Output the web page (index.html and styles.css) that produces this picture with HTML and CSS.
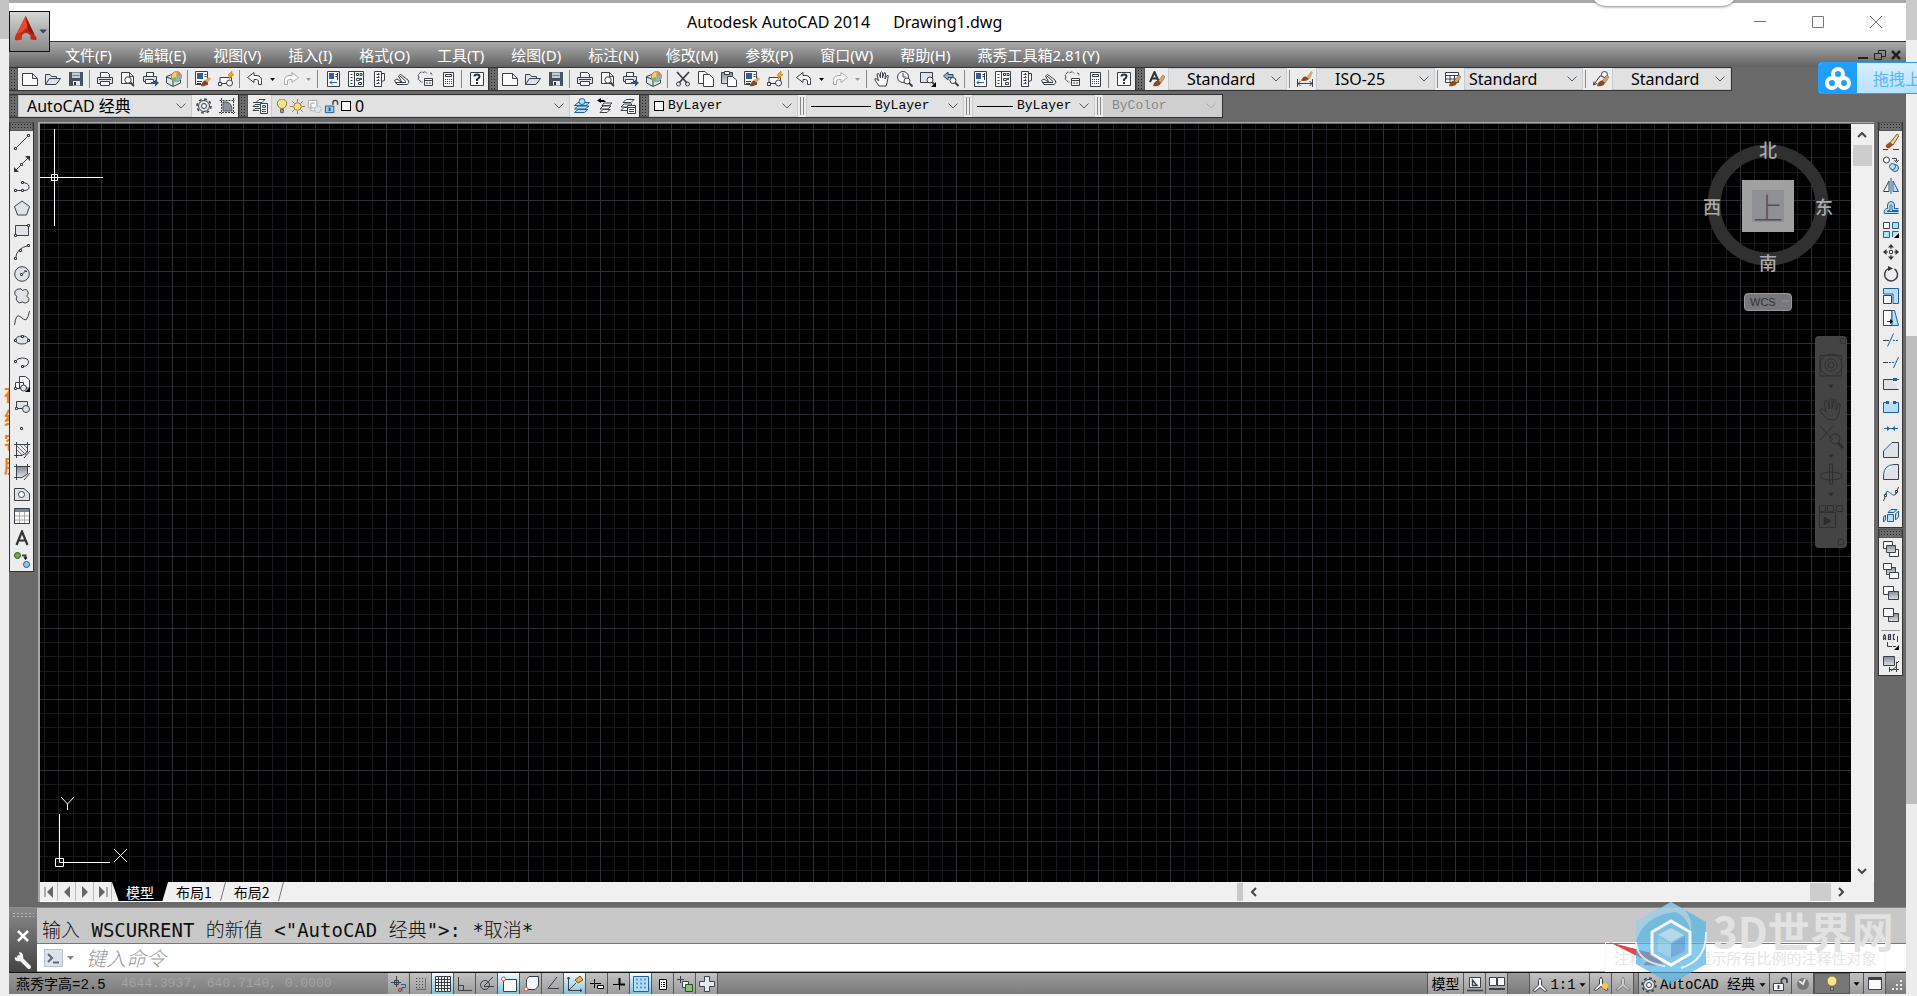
FILE: index.html
```html
<!DOCTYPE html>
<html lang="zh-CN">
<head>
<meta charset="utf-8">
<title>Autodesk AutoCAD 2014 - Drawing1.dwg</title>
<link rel="stylesheet" href="styles.css">
</head>
<body>
<svg class="sprite" aria-hidden="true">
  <defs>
    <linearGradient id="shade" x1="0" y1="0" x2="0" y2="1"><stop offset="0" stop-color="#858b94"/><stop offset="1" stop-color="#dde0e4"/></linearGradient>
    <pattern id="mesh" width="285" height="285" x="61" y="5" patternUnits="userSpaceOnUse">
      <path class="minor" d="M14.500 0V285M28.500 0V285M43.500 0V285M57.500 0V285M85.500 0V285M100.500 0V285M114.500 0V285M128.500 0V285M157.500 0V285M171.500 0V285M185.500 0V285M200.500 0V285M228.500 0V285M242.500 0V285M257.500 0V285M271.500 0V285"/>
      <path class="minor" d="M0 14.500H285M0 28.500H285M0 43.500H285M0 57.500H285M0 85.500H285M0 100.500H285M0 114.500H285M0 128.500H285M0 157.500H285M0 171.500H285M0 185.500H285M0 200.500H285M0 228.500H285M0 242.500H285M0 257.500H285M0 271.500H285"/>
      <path class="major" d="M.5 0V285M71.500 0V285M142.500 0V285M214.500 0V285M0 .5H285M0 71.500H285M0 142.500H285M0 214.500H285"/>
    </pattern>
    <symbol id="new" viewBox="0 0 16 16"><path class="k w" d="M.5 2.500H10.500L15.500 7.500V14.500H.5zM10.500 2.500V7.500H15.500"/></symbol>
    <symbol id="open" viewBox="0 0 16 16"><path class="k g" d="M.5 13.500V3.500L5 3.500 6.500 5.500H11.500V7.500M.5 13.500L4.500 7.500H15.500L11 13.500z"/></symbol>
    <symbol id="save" viewBox="0 0 16 16"><path d="M1 1H15V15H1z" fill="#4a5360"/><path d="M4 1.500H12V7H4z" fill="#c3cbd6"/><path d="M5 10H12V14.500H5z" fill="#e8ecf0"/><path d="M6 11H8V14H6z" fill="#333"/><path d="M4.500 4.500H11.500" stroke="#77818e"/></symbol>
    <symbol id="print" viewBox="0 0 16 16"><path class="k w" d="M3.500 6V1.500H10.500L12.500 3.500V6"/><path class="k g" d="M.5 6.500H15.500V12.500H.5z"/><path class="k w" d="M3.500 10.500H12.500V14.500H3.500z"/><path class="k" d="M2 8.500H14"/></symbol>
    <symbol id="preview" viewBox="0 0 16 16"><path class="k w" d="M1.500 1.500H9.500L13.500 5.500V12.500H1.500zM9.500 1.500V5.500H13.500"/><circle class="k w" cx="8" cy="9" r="3.200"/><path class="k t" d="M10.500 11.500L14 15"/></symbol>
    <symbol id="publish" viewBox="0 0 16 16"><path class="k w" d="M3.500 5V1.500H10.500V5"/><path class="k g" d="M.5 5.500H13.500V10.500H.5z"/><path class="k w" d="M2.500 8.500H10.500V12.500H2.500z"/><path d="M8 11H12V8.500L16 12 12 15.500V13H8z" fill="#225b95"/></symbol>
    <symbol id="print3d" viewBox="0 0 16 16"><path class="k g" d="M.5 5.500L6 3.500 14.500 6V12L7 15.500 .5 12zM.5 6L7 8.500V15"/><circle cx="10.500" cy="5.500" r="5" fill="#f1d36b" stroke="#7d8c93"/><path d="M10.500 5.500V.5A5 5 0 0 1 15.500 5.500z" fill="#e08a5b"/><path d="M10.500 5.500H15.500A5 5 0 0 1 10.500 10.500z" fill="#78b6df"/><path d="M10.500 5.500V10.500A5 5 0 0 1 6 7z" fill="#86b867"/></symbol>
    <symbol id="match" viewBox="0 0 16 16"><path class="k w" d="M.5 .5H12.500V13.500H.5z"/><path d="M2 2H8V8H2z" fill="#2f5f96"/><path class="k" d="M9.500 3.500H11.500M9.500 5.500H11.500M2 10.500H7M2 12.500H6"/><path d="M9 10L14 6 16 8 12 12z" fill="#d8a66c"/><path d="M6 15Q7 10 10 9.500L13 12Q11 16 6 15z" fill="#8b4a1d"/></symbol>
    <symbol id="block" viewBox="0 0 16 16"><path class="k w" d="M2 6.500H13.500V12.500H2z"/><circle class="k w" cx="11.500" cy="12" r="3"/><path class="k w" d="M.5 11.500H3.500V14.500H.5z"/><path d="M10 4L14 0V3L16 3.500 11 8V5z" fill="#f0a324" stroke="#b26b00" stroke-width=".5"/></symbol>
    <symbol id="undo" viewBox="0 0 16 16"><path class="k w" d="M.5 6.500L7 1.500V4.500H10Q14.500 5 14.500 9.500V13.500H11.500V10Q11 8.500 9.500 8.500H7V11.500z"/></symbol>
    <symbol id="redo" viewBox="0 0 16 16"><path class="q w" d="M15.500 6.500L9 1.500V4.500H6Q1.500 5 1.500 9.500V13.500H4.500V10Q5 8.500 6.500 8.500H9V11.500z"/></symbol>
    <symbol id="tri" viewBox="0 0 7 5"><path d="M1 1H6L3.500 4z" fill="currentColor"/></symbol>
    <symbol id="props" viewBox="0 0 16 16"><path class="k w" d="M2.500 .5H14.500V15.500H2.500z"/><path d="M4 2H9V8H4z" fill="#2f5f96"/><path class="k" d="M10.500 3.500H13M10.500 5.500H13M12.500 2V9"/><path d="M5 11.500H12M5 11.500L7 9.500M5 11.500L7 13.500" class="b"/></symbol>
    <symbol id="dc" viewBox="0 0 16 16"><path class="k w" d="M.5 .5H15.500V15.500H.5zM6.500 .5V15.500"/><path class="k" d="M2.500 3.500H4.500M2.500 6.500H4.500M2.500 9.500H4.500M2.500 12.500H4.500M8.500 2.500H10.500V4.500H8.500zM12 2.500H14V4.500H12zM8.500 7.500H11.500V9.500H8.500zM10.500 11.500H13.500V13.500H10.500z"/><path d="M12 7H14V9H12z" fill="#2f5f96"/></symbol>
    <symbol id="palettes" viewBox="0 0 16 16"><path class="k w" d="M3.500 .5H10.500V15.500H3.500zM10.500 2.500H13.500V9.500L10.500 10.500"/><path class="k" d="M5.500 3.500H9M5.500 6.500H9M5.500 9.500H9M5.500 12.500H9M7.500 2V14" stroke-dasharray="2 1"/></symbol>
    <symbol id="sheet" viewBox="0 0 16 16"><path class="k w" d="M.5 9.500L3 8 8 11.500 4.500 5 6.500 3.500 14 9Q16.500 12 13 13.500H3z"/><path class="k" d="M1 11.500H12M6 5L12 10.500"/></symbol>
    <symbol id="markup" viewBox="0 0 16 16"><path class="k" d="M2 6Q0 4 2.500 3 3 0 6 1.500 9 0 10 2.500M2 6Q0 9 3 9.500 4 12 6 11M13 2Q16 2 14.500 5" stroke-dasharray="3 1"/><path class="k w" d="M7.500 7.500H15.500V14.500H7.500zM7.500 9.500H15.500"/><path class="k" d="M9 12H14" stroke-dasharray="2 1"/></symbol>
    <symbol id="calc" viewBox="0 0 16 16"><path class="k w" d="M3.500 1.500H13.500V15.500H3.500z"/><path class="k" d="M5.500 3.500H11.500V5.500H5.500z"/><path class="k" d="M5 8.500H12M5 10.500H12M5 12.500H12" stroke-dasharray="1 1"/></symbol>
    <symbol id="help" viewBox="0 0 16 16"><path class="k w" d="M1.500 1.500H14.500V14.500H1.500z"/><path d="M5.500 5.500Q5.500 3.500 8 3.500T10.500 5.500Q10.500 7 8 8.500V10" fill="none" stroke="#29303a" stroke-width="2"/><path d="M7 11H9V13H7z" fill="#29303a"/></symbol>
    <symbol id="cut" viewBox="0 0 16 16"><path d="M2 1L12 12M14 1L4 12" stroke="#3a4048" stroke-width="1.800" fill="none"/><circle class="k" cx="3.500" cy="13" r="2"/><circle class="k" cx="12.500" cy="13" r="2"/></symbol>
    <symbol id="copyc" viewBox="0 0 16 16"><path class="k w" d="M.5 .5H7L9.500 3V12.500H.5z"/><path class="k w" d="M5.500 3.500H11.500L15.500 7.500V15.500H5.500z"/></symbol>
    <symbol id="paste" viewBox="0 0 16 16"><path class="k sh" d="M.5 1.500H11.500V12.500H.5z"/><path class="k w" d="M3.500 .5H8.500V3.500H3.500z"/><path class="k w" d="M6.500 5.500H11.500L15.500 9V15.500H6.500z"/></symbol>
    <symbol id="pan" viewBox="0 0 16 16"><path class="k w" d="M5 15L1 9Q0 7 3 8L4.500 10 3 3Q4.500 1.500 5.500 4L6.500 7V1.500Q8 0 8.500 1.500V7L10 2Q11.500 1 11.500 3L11 8 13 4.500Q15 4 14 6.500L13 12 12 15z"/></symbol>
    <symbol id="zoomrt" viewBox="0 0 16 16"><circle class="k w" cx="6" cy="6" r="5.500"/><path class="k" d="M6 2V6H9"/><circle class="k w" cx="10" cy="10" r="3"/><path class="k t" d="M12 12L15.500 15.500"/></symbol>
    <symbol id="zoomwin" viewBox="0 0 16 16"><path class="k g" d="M.5 1.500H12.500V11.500H.5z"/><circle class="k w" cx="10" cy="9" r="3"/><path class="k t" d="M12 11L14 13"/><path d="M16 11V16H11z"/></symbol>
    <symbol id="zoomprev" viewBox="0 0 16 16"><path d="M.5 5L5 1V3.500H10V6.500H5V9z" fill="#8fb4d4" stroke="#314254"/><circle class="k w" cx="10" cy="9.500" r="3"/><path class="k t" d="M12 11.500L15.500 15"/></symbol>
    <symbol id="brush" viewBox="0 0 16 16"><path d="M9 10L14 4 16 6 12 12z" fill="#d8a66c" stroke="#6b4a2c" stroke-width=".5"/><path d="M4 15Q5 10 9 9.500L12 12Q10 16 4 15z" fill="#8b4a1d"/></symbol>
    <symbol id="textstyle" viewBox="0 0 16 16"><path d="M1 11L5.500 1 10 11M3 7.500H8" fill="none" stroke="#333" stroke-width="2"/><use href="#brush" width="16" height="16"/></symbol>
    <symbol id="dimstyle" viewBox="0 0 16 16"><path class="k" d="M.5 8V16M15.500 8V16M1 12.500H15M3.500 10L1 12.500 3.500 15M12.500 10L15 12.500 12.500 15"/><path d="M9 7L14 0 16 1 13 8z" fill="#d8a66c"/><path d="M4 9.500Q6 5 9 5.500L12 8Q9 11 4 9.500z" fill="#8b4a1d"/></symbol>
    <symbol id="tablestyle" viewBox="0 0 16 16"><path class="k w" d="M.5 1.500H13.500V11.500H.5zM.5 4.500H13.500M.5 8H13.500M5 4V11.500M9.500 4V11.500"/><use href="#brush" width="16" height="16"/></symbol>
    <symbol id="leaderstyle" viewBox="0 0 16 16"><path class="k" d="M.5 14L7 5H9M.5 14L1 10.500M.5 14L4 12.500"/><circle class="k w" cx="11.500" cy="3.500" r="3"/><use href="#brush" width="16" height="16"/></symbol>
    <symbol id="gear" viewBox="0 0 16 16"><circle class="k" cx="8" cy="8" r="7" stroke-width="1.500" stroke-dasharray="2.800 2.690"/><circle class="k g" cx="8" cy="8" r="5.500"/><circle class="k w" cx="8" cy="8" r="2.500"/></symbol>
    <symbol id="myws" viewBox="0 0 16 16"><path class="k" d="M.5 2.500H16M2.500 0V16M0 14.500H16M14.500 0V16" stroke-dasharray="2 1"/><path d="M4 13V4H8Q13 5 13 13z" fill="#8c939c" stroke="#555"/></symbol>
    <symbol id="layerprops" viewBox="0 0 16 16"><path class="k w" d="M4 4.500L7 1.500H13L10 4.500zM1 8.500L3 6.500H8M1 12.500L3 10.500H8M1 4.500H6M1 8.500H7M1 12.500H7"/><path class="k w" d="M8.500 5.500H15.500V15.500H8.500z"/><path class="b bf" d="M10.500 7.500H13.500V9.500H10.500z"/><path class="b" d="M10 11.500H14M10 13.500H14"/></symbol>
    <symbol id="layercur" viewBox="0 0 16 16"><path class="b bf" d="M.5 14.500L4 11.500H14L10.500 14.500zM.5 11L4 8H15L11 11zM.5 7.500L4 4.500H15.500L12 7.500z"/><circle class="b bf" cx="8" cy="3.500" r="3"/></symbol>
    <symbol id="layerprev" viewBox="0 0 16 16"><path class="k w" d="M3 14.500L6 11.500H13L10 14.500zM3 11L6 8H14L11 11zM5 7.500L7 5H15L12 7.500z"/><path d="M0 2.500L4 0V2H7L9 4H4V5z"/></symbol>
    <symbol id="layerstate" viewBox="0 0 16 16"><path class="k w" d="M1 12.500L4 9.500H11L8 12.500zM1 9L4 6H12L9 9zM3 4.500L6 1.500H14L11 4.500z"/><path class="k w" d="M7.500 7.500H15.500V15.500H7.500zM7.500 9.500H15.500M9 11.500H14M9 13.500H14"/></symbol>
    <symbol id="bulb" viewBox="0 0 12 16"><path d="M4 10Q1 7.500 1 5A5 5 0 0 1 11 5Q11 7.500 8 10z" fill="#fbe28f" stroke="#8c7333"/><path d="M4.500 11H7.500V14.500H4.500z" fill="#a2a2a2" stroke="#555"/></symbol>
    <symbol id="sun" viewBox="0 0 16 16"><circle cx="8" cy="8" r="4" fill="#fbdf86" stroke="#96741f"/><path d="M8 0V3M8 13V16M0 8H3M13 8H16M2.500 2.500L4.500 4.500M13.500 2.500L11.500 4.500M2.500 13.500L4.500 11.500M13.500 13.500L11.500 11.500" stroke="#96741f"/></symbol>
    <symbol id="vpfreeze" viewBox="0 0 16 16"><path class="q w" d="M1.500 1.500H10.500V9.500H1.500zM4 4.500H8M4 4.500V12.500H8"/><circle class="q g" cx="11.500" cy="11" r="3.500" stroke-dasharray="2 1"/></symbol>
    <symbol id="unlock" viewBox="0 0 16 16"><path class="k" d="M9.500 6V4Q9.500 1.500 12 1.500T14.500 4V6" stroke-width="1.500"/><path d="M1.500 7.500H10.500V14.500H1.500z" fill="#96cdf0" stroke="#265887"/><path d="M5 9H7V13H5z" fill="#265887"/></symbol>
    <symbol id="chev" viewBox="0 0 10 6"><path d="M.5 .5L5 5 9.500 .5" fill="none" stroke="currentColor"/></symbol>
    <symbol id="line" viewBox="0 0 16 16"><path class="k" d="M1.500 14.500L14.500 1.500"/><path class="k w" d="M.5 13.500H2.500V15.500H.5zM13.500 .5H15.500V2.500H13.500z"/></symbol>
    <symbol id="xline" viewBox="0 0 16 16"><path class="k" d="M1.500 14.500L14.500 1.500"/><path d="M0 16V11L5 16zM16 0V5L11 0z" fill="#333"/><path class="k w" d="M6.500 7.500H8.500V9.500H6.500z"/></symbol>
    <symbol id="pline" viewBox="0 0 16 16"><path class="k" d="M1.500 12.500H11Q15.500 12 15 8.500T8.500 4.500"/><path class="k w" d="M.5 11.500H2.500V13.500H.5zM7.500 11.500H9.500V13.500H7.500zM7.500 3.500H9.500V5.500H7.500z"/></symbol>
    <symbol id="polygon" viewBox="0 0 16 16"><path class="k g" d="M8 1L15.500 6.500 12.500 15H3.500L.5 6.500z"/></symbol>
    <symbol id="rect" viewBox="0 0 16 16"><path class="k g" d="M1.500 3.500H14.500V13.500H1.500z"/><path class="k w" d="M.5 12.500H2.500V14.500H.5zM13.500 2.500H15.500V4.500H13.500z"/></symbol>
    <symbol id="arc" viewBox="0 0 16 16"><path class="k" d="M1.500 14.500Q2.500 4 14.500 1.500"/><path class="k w" d="M.5 13.500H2.500V15.500H.5zM13.500 .5H15.500V2.500H13.500zM5.500 5.500H7.500V7.500H5.500z"/></symbol>
    <symbol id="circle" viewBox="0 0 16 16"><circle class="k g" cx="8" cy="8" r="7.300"/><path class="k" d="M8 8.500L12 4.500M11 4V5.500H13"/><path class="k w" d="M6.500 7.500H8.500V9.500H6.500z"/></symbol>
    <symbol id="cloud" viewBox="0 0 16 16"><path class="k g" d="M4 1Q8 0 8.500 2.500 13 0 14 4 15 7 12.500 8 16.500 10 14.500 13.500 11 16.500 8.500 14 5 16 3.500 13.500 1 11 3 8.500 -.5 7 1 3.500 2 1.500 4 1z"/></symbol>
    <symbol id="spline" viewBox="0 0 16 16"><path class="k" d="M.5 15Q2 3 6 6.500T12 10Q14.500 7 15.500 1"/></symbol>
    <symbol id="ellipse" viewBox="0 0 16 16"><ellipse class="k g" cx="8" cy="8" rx="6.500" ry="4"/><path class="k w" d="M.5 7.500H2.500V9.500H.5zM13.500 7.500H15.500V9.500H13.500zM7.500 3.500H9.500V5.500H7.500z"/></symbol>
    <symbol id="elarc" viewBox="0 0 16 16"><path class="k" d="M1.500 7.500Q3 4 8 4 14.500 4 14.500 8T9 12.500"/><path class="k w" d="M.5 6.500H2.500V8.500H.5zM7.500 11.500H9.500V13.500H7.500z"/></symbol>
    <symbol id="insert" viewBox="0 0 16 16"><path class="k w" d="M5.500 .5H11.500L15.500 4V12H5.500zM1.500 6.500H9.500V12.500H1.500z"/><circle class="k g" cx="9.500" cy="12" r="3"/><path class="k w" d="M.5 11.500H2.500V13.500H.5z"/><path d="M16 11V16H11z"/></symbol>
    <symbol id="mkblock" viewBox="0 0 16 16"><path class="k g" d="M2.500 3.500H13.500V10.500H2.500z"/><circle class="k g" cx="12" cy="11" r="3.500"/><path class="k w" d="M1.500 9.500H3.500V11.500H1.500z"/></symbol>
    <symbol id="point" viewBox="0 0 16 16"><path class="k w" d="M6.500 7.500H8.500V9.500H6.500z"/></symbol>
    <symbol id="hatch" viewBox="0 0 16 16"><path class="k" d="M0 2.500H16M2.500 0V16M13.500 0V10L8 13.500H0M10 16L16 9"/><path d="M3 4L12 13M3 8L8 13M6 3L13 10M10 3L13 6" stroke="#777"/></symbol>
    <symbol id="gradient" viewBox="0 0 16 16"><path d="M3 3H13V10L9 13H3z" class="sh"/><path class="k" d="M0 2.500H16M2.500 0V16M13.500 0V10L8 13.500H0M10 16L16 9"/></symbol>
    <symbol id="region" viewBox="0 0 16 16"><path class="k g" d="M.5 2.500H10L15.500 7.500V14.500H.5z"/><circle class="k w" cx="7.500" cy="8.500" r="3"/></symbol>
    <symbol id="table" viewBox="0 0 16 16"><path class="k w" d="M.5 .5H15.500V15.500H.5z"/><path class="q" d="M1 8H15M1 12H15M5.500 4V15M10.500 4V15"/><path d="M1 1H15V4H1z" fill="#7d8794"/></symbol>
    <symbol id="mtext" viewBox="0 0 16 16"><path d="M2.500 15L8 1.500 13.500 15M4.500 10.500H11.500" fill="none" stroke="#333" stroke-width="2.200"/></symbol>
    <symbol id="addsel" viewBox="0 0 16 16"><circle cx="3.500" cy="3.500" r="3" fill="#73a84e" stroke="#2f5a1c"/><circle cx="12.500" cy="12.500" r="3" fill="#8ec8ee" stroke="#225b95"/><path d="M8 3.500H11.500V6" class="k t"/><path d="M9.500 5.500H13.500L11.500 8z"/></symbol>
    <symbol id="erase" viewBox="0 0 16 16"><path class="k" d="M0 15.500H5M10 15.500H16"/><path d="M7 9L14 0 16 1.500 10 11z" fill="#f3d79b" stroke="#795738"/><path d="M3 11L7 8 10 11 6 14.500Q2 14 3 11z" fill="#a84b20"/></symbol>
    <symbol id="copy" viewBox="0 0 16 16"><circle class="k w" cx="3.500" cy="4" r="3"/><path class="k" d="M9 2.500H13.500V5M11.500 4L13.500 6.500 15.500 4"/><circle class="b bf" cx="12" cy="12" r="3.500"/><circle class="b bf" cx="9.500" cy="10.500" r="3"/></symbol>
    <symbol id="mirror" viewBox="0 0 16 16"><path class="k w" d="M6 3V13.500H.5z"/><path class="b bf" d="M10 3V13.500H15.500z"/><path class="b" d="M8 0V16"/></symbol>
    <symbol id="offset" viewBox="0 0 16 16"><path class="b bf" d="M15.500 13.500H1.500Q0 9 4.500 8.500V5Q5 1.500 8 1.500T11.500 5V8.500H15.500"/><path class="b w" d="M15.500 11.500H4Q5 10 7 10.500V5.500Q8 4 9 5.500V10.500H15.500"/></symbol>
    <symbol id="array" viewBox="0 0 16 16"><path class="k w" d="M.5 .5H6.500V6.500H.5z"/><path class="b bf" d="M9.500 .5H15.500V6.500H9.500zM.5 9.500H6.500V15.500H.5zM9.500 15V9.500H15.500"/><path d="M16 11V16H11z"/></symbol>
    <symbol id="move" viewBox="0 0 16 16"><path class="k w" d="M6.500 6.500H9.500V9.500H6.500z"/><path d="M8 0L11 3.500H5zM8 16L5 12.500H11zM0 8L3.500 5V11zM16 8L12.500 11V5z" fill="#333"/><path class="k" d="M8 3V5M8 11V13M3 8H5M11 8H13"/></symbol>
    <symbol id="rotate" viewBox="0 0 16 16"><path class="k" stroke-width="1.500" d="M11.500 3A6.500 6.500 0 1 1 5 2.800"/><path d="M5 0L10 2.500 5 5z" fill="#333"/></symbol>
    <symbol id="scale" viewBox="0 0 16 16"><path class="b bf" d="M.5 .5H15.500V15.500H10V6H.5z"/><path class="k w" d="M.5 7.500H8.500V15.500H.5z"/></symbol>
    <symbol id="stretch" viewBox="0 0 16 16"><path class="k w" d="M.5 .5H9V15.500H.5z"/><path class="b bf" d="M9 .5H11.500L15.500 15.500H9z"/><path class="k" d="M4 11.500H8"/><path d="M7 9L10 11.500 7 14z"/></symbol>
    <symbol id="trim" viewBox="0 0 16 16"><path class="k" d="M0 8.500H6"/><path class="b" d="M4.500 14.500L10.500 1.500"/><path class="b" d="M10 8.500H16" stroke-dasharray="2 1"/></symbol>
    <symbol id="extend" viewBox="0 0 16 16"><path class="k" d="M0 8.500H5"/><path class="b" d="M6 8.500H12" stroke-dasharray="2 1"/><path class="b" d="M10.500 14L15.500 3"/></symbol>
    <symbol id="breakpt" viewBox="0 0 16 16"><path class="k g" d="M15.500 13.500H.5V3.500H10"/><path d="M10 2H14V5H10z" fill="#245f9d"/><path class="b" d="M9 3.500H16"/></symbol>
    <symbol id="break" viewBox="0 0 16 16"><path class="b bf" d="M3 4.500H.5V14.500H15.500V4.500H13"/><path d="M3 3H6V6H3zM10 3H13V6H10z" fill="#245f9d"/></symbol>
    <symbol id="join" viewBox="0 0 16 16"><path class="b" d="M1 8.500H15"/><path d="M4 6V11L7 8.500zM12 6V11L9 8.500z" fill="#245f9d"/></symbol>
    <symbol id="chamfer" viewBox="0 0 16 16"><path class="k g" d="M9 .5H15.500V15.500H.5V9"/><path class="b" d="M.5 9L9 .5"/></symbol>
    <symbol id="fillet" viewBox="0 0 16 16"><path class="k g" d="M11 .5H15.500V15.500H.5V11"/><path class="b" d="M.5 11Q1 1 11 .5"/></symbol>
    <symbol id="blend" viewBox="0 0 16 16"><path class="b" d="M2.500 10Q3 3 6.500 6.500T12 9Q13.500 8 13.500 5"/><path class="k" d="M.5 15L3.500 7M15.500 1L12.500 8"/><path class="k w" d="M1.500 8.500H3.500V10.500H1.500zM12.500 4.500H14.500V6.500H12.500z"/></symbol>
    <symbol id="explode" viewBox="0 0 16 16"><path class="b bf" d="M4.500 6.500H10.500V13.500H4.500zM5 4.500L8 1.500H14L11 4.500zM12.500 6L15.500 3V9L12.500 12zM2.500 7L.5 9V14L2.500 12z"/></symbol>
    <symbol id="front" viewBox="0 0 16 16"><path class="k w" d="M.5 .5H9.500V7.500H.5zM6.500 8.500H15.500V15.500H6.500z"/><path class="k sh" d="M3.500 4.500H12.500V11.500H3.500z"/></symbol>
    <symbol id="back" viewBox="0 0 16 16"><path class="k sh" d="M3.500 4.500H12.500V11.500H3.500z"/><path class="k w" d="M.5 .5H8.500V6.500H.5zM6.500 9.500H15.500V15.500H6.500z"/></symbol>
    <symbol id="above" viewBox="0 0 16 16"><path class="k w" d="M.5 1.500H10.500V9.500H.5z"/><path class="k sh" d="M5.500 6.500H15.500V14.500H5.500z"/></symbol>
    <symbol id="under" viewBox="0 0 16 16"><path class="k sh" d="M5.500 6.500H15.500V14.500H5.500z"/><path class="k w" d="M.5 1.500H10.500V9.500H.5z"/></symbol>
    <symbol id="textfront" viewBox="0 0 16 16"><path class="k" d="M.5 6V2.500L1.500 .5 2.500 2.500V6M.5 4.500H2.500M5.500 .5V5.500H7.500V.5H5.500M5.500 3H7.500M12 .5H10.500V5.500H12" stroke-width="1.200"/><path class="k" d="M14.500 2V8M4.500 8V12.500H9"/><path class="k" d="M10 12.500H13"/><path d="M16 11V16H11z"/></symbol>
    <symbol id="hatchback" viewBox="0 0 16 16"><path class="k sh" d="M.5 .5H11.500V9.500H.5z"/><path class="k" d="M6 13.500H16M13.500 6V16M6.500 11V16M8 15L14 10M14 7L16 5"/></symbol>
    <symbol id="infer" viewBox="0 0 16 16"><path class="k" d="M0 6.500H10M5.500 0V11M3.500 4.500H7.500V8.500H3.500z"/><path d="M10 8.500H14.500V11.500H11V15" class="b"/><circle cx="9" cy="14" r="1.500" fill="none" stroke="#b02d2d"/></symbol>
    <symbol id="snap" viewBox="0 0 16 16"><path class="k" d="M3 2.500H12M3 5.500H12M3 8.500H12M3 11.500H12" stroke-dasharray="1 2"/><path class="k" d="M12.500 2V13.500H3" stroke-width=".6"/></symbol>
    <symbol id="grid" viewBox="0 0 16 16"><path class="k w" d="M.5 .5H15.500V15.500H.5zM3.500 0V16M6.500 0V16M9.500 0V16M12.500 0V16M0 3.500H16M0 6.500H16M0 9.500H16M0 12.500H16"/></symbol>
    <symbol id="ortho" viewBox="0 0 16 16"><path class="k" d="M1.500 1V14.500H15M1.500 9.500H6.500V14.500"/></symbol>
    <symbol id="polar" viewBox="0 0 16 16"><circle class="k" cx="6" cy="9" r="4.500"/><path class="k" d="M5 10L14 1M5 10.500H15"/></symbol>
    <symbol id="osnap" viewBox="0 0 16 16"><path class="k w" d="M2.500 3.500H15.500V15.500H2.500z"/><circle cx="2.500" cy="3" r="2" fill="#fff" stroke="#d3562c"/></symbol>
    <symbol id="osnap3" viewBox="0 0 16 16"><path class="k w" d="M3.500 3.500L6 .5H15.500V10L12 13.500H3.500z"/><circle cx="3" cy="13" r="2" fill="#fff" stroke="#d3562c"/></symbol>
    <symbol id="otrack" viewBox="0 0 16 16"><path class="k" d="M12 1L3 12.500H14"/></symbol>
    <symbol id="ducs" viewBox="0 0 16 16"><path class="k" d="M1.500 1V14.500H15M1.500 14.500L9 7M0 3L1.500 1 3 3M13 13L15 14.500 13 16"/><path d="M8 4L13 0 16 4 11 7z" fill="#f2b04b" stroke="#8b4a1d"/></symbol>
    <symbol id="dyn" viewBox="0 0 16 16"><path d="M1 7.500H12M5.500 3V12" stroke="#000"/><path class="w" stroke="#000" d="M8.500 9.500H14.500V12.500H8.500z"/></symbol>
    <symbol id="lwt" viewBox="0 0 16 16"><path d="M2 8.500H8M8.500 2V14" stroke="#000"/><path d="M8 8.500H14M8.500 2V9" stroke="#000" stroke-width="2"/></symbol>
    <symbol id="tpy" viewBox="0 0 16 16"><path class="b bf" d="M.5 .5H15.500V15.500H.5z"/><path d="M3 3.500H13M3 7.500H13M3 11.500H13" stroke="#5d9cc9" stroke-width="2" stroke-dasharray="2 2"/><path d="M5 5.500H13M5 9.500H13M5 13.500H13" stroke="#a7d5ef" stroke-width="2" stroke-dasharray="2 2"/></symbol>
    <symbol id="qp" viewBox="0 0 16 16"><path class="w" stroke="#000" d="M4.500 3.500H11.500V13.500H4.500z"/><path stroke="#000" d="M6 6.500H7M8 6.500H10M6 8.500H7M8 8.500H10M6 10.500H7M8 10.500H10"/></symbol>
    <symbol id="sc" viewBox="0 0 16 16"><path class="k" d="M0 3.500H7M3.500 0V7"/><path class="k w" d="M5.500 5.500H11.500V11.500H5.500z"/><path d="M8.500 8.500H15.500V15.500H8.500z" fill="#8cc079" stroke="#28551d"/></symbol>
    <symbol id="am" viewBox="0 0 16 16"><path d="M5.500 .5H10.500V5.500H15.500V10.500H10.500V15.500H5.500V10.500H.5V5.500H5.500z" fill="#e6ebf1" stroke="#3b4450"/></symbol>
    <symbol id="mspace" viewBox="0 0 16 16"><path class="k w" d="M2.500 1.500H13.500V11.500H2.500z"/><path class="k" d="M5.500 4V9.500H10zM0 14.500H16" stroke-width="1.500"/></symbol>
    <symbol id="qview" viewBox="0 0 16 16"><path class="k w" d="M.5 1.500H7.500V9.500H.5zM8.500 1.500H15.500V9.500H8.500z"/><path class="k" d="M0 13H16" stroke-width="2"/></symbol>
    <symbol id="anno" viewBox="0 0 16 16"><path class="k w" d="M8 1L9.500 3.500V8L15 13.500 13 14.500 8 10.500 3 14.500 1 13.500 6.500 8V3.500z"/></symbol>
    <symbol id="wrench" viewBox="0 0 18 18"><path d="M5 5L15 15" stroke="#f4f4f4" stroke-width="4" stroke-linecap="round"/><path d="M1 5Q0 8 3 9T8 8 9 3 5 0L6 4 4 6z" fill="#f4f4f4"/></symbol>
  </defs>
</svg>
<div class="desktop">
  <aside class="edge edge-left"><p>在线客服</p></aside>

  <main class="window">
    <header class="titlebar">
      <span>Autodesk AutoCAD 2014</span><span>Drawing1.dwg</span>
      <div class="caption">
        <button aria-label="最小化"><svg viewBox="0 0 12 12"><path d="M0 5.500H12"/></svg></button>
        <button aria-label="最大化"><svg viewBox="0 0 12 12"><path d="M.5 .5H11.500V11.500H.5z"/></svg></button>
        <button aria-label="关闭"><svg viewBox="0 0 12 12"><path d="M0 0L12 12M12 0L0 12"/></svg></button>
      </div>
    </header>
    <button class="appbutton" aria-label="应用程序菜单">
      <svg viewBox="0 0 40 40"><path d="M16 4L25 23Q29 28 26 29L21 28V24Q16 19 12 24V28L7 29Q3 29 7 22z" fill="#b72a16"/><path d="M16 4L18 15 12 21 7 22z" fill="#e8482e"/><path d="M16 4L25 23 19 20 18 15z" fill="#8e1a0d"/><path d="M7 22L12 21V28L7 29Q4 28 7 22z" fill="#cf2e17"/><path d="M30 18H38L34 22z" fill="#3b4854"/></svg>
    </button>
    <nav class="menubar">
      <button>文件(F)</button><button>编辑(E)</button><button>视图(V)</button><button>插入(I)</button><button>格式(O)</button><button>工具(T)</button><button>绘图(D)</button><button>标注(N)</button><button>修改(M)</button><button>参数(P)</button><button>窗口(W)</button><button>帮助(H)</button><button>燕秀工具箱2.81(Y)</button>
      <div class="mdi"><svg viewBox="0 0 44 12"><path d="M0 9H10" stroke-width="2"/><path d="M16.500 4.500H23.500V10.500H16.500zM20.500 4V1.500H27.500V7.500H24"/><path d="M34 2L42 10M42 2L34 10" stroke-width="2.500"/></svg></div>
    </nav>

    <div class="docks">
      <div class="row">
        <div class="bar"><i class="grip"></i>
          <button class="tb" title="新建"><svg><use href="#new"/></svg></button><button class="tb" title="打开"><svg><use href="#open"/></svg></button><button class="tb" title="保存"><svg><use href="#save"/></svg></button><i class="sep"></i>
          <button class="tb" title="打印"><svg><use href="#print"/></svg></button><button class="tb" title="打印预览"><svg><use href="#preview"/></svg></button><button class="tb" title="发布"><svg><use href="#publish"/></svg></button><button class="tb" title="三维打印"><svg><use href="#print3d"/></svg></button><i class="sep"></i>
          <button class="tb" title="特性匹配"><svg><use href="#match"/></svg></button><button class="tb" title="块编辑器"><svg><use href="#block"/></svg></button><i class="sep"></i>
          <button class="tb" title="放弃"><svg><use href="#undo"/></svg></button><button class="drop" title="放弃列表"><svg><use href="#tri"/></svg></button><button class="tb" title="重做"><svg><use href="#redo"/></svg></button><button class="drop dim" title="重做列表"><svg><use href="#tri"/></svg></button><i class="sep"></i>
          <button class="tb" title="特性"><svg><use href="#props"/></svg></button><button class="tb" title="设计中心"><svg><use href="#dc"/></svg></button><button class="tb" title="工具选项板"><svg><use href="#palettes"/></svg></button><button class="tb" title="图纸集"><svg><use href="#sheet"/></svg></button><button class="tb" title="标记集"><svg><use href="#markup"/></svg></button><button class="tb" title="快速计算器"><svg><use href="#calc"/></svg></button><i class="sep"></i>
          <button class="tb" title="帮助"><svg><use href="#help"/></svg></button>
        </div>
        <div class="bar"><i class="grip"></i>
          <button class="tb" title="新建"><svg><use href="#new"/></svg></button><button class="tb" title="打开"><svg><use href="#open"/></svg></button><button class="tb" title="保存"><svg><use href="#save"/></svg></button><i class="sep"></i>
          <button class="tb" title="打印"><svg><use href="#print"/></svg></button><button class="tb" title="打印预览"><svg><use href="#preview"/></svg></button><button class="tb" title="发布"><svg><use href="#publish"/></svg></button><button class="tb" title="三维打印"><svg><use href="#print3d"/></svg></button><i class="sep"></i>
          <button class="tb" title="剪切"><svg><use href="#cut"/></svg></button><button class="tb" title="复制"><svg><use href="#copyc"/></svg></button><button class="tb" title="粘贴"><svg><use href="#paste"/></svg></button><button class="tb" title="特性匹配"><svg><use href="#match"/></svg></button><button class="tb" title="块编辑器"><svg><use href="#block"/></svg></button><i class="sep"></i>
          <button class="tb" title="放弃"><svg><use href="#undo"/></svg></button><button class="drop" title="放弃列表"><svg><use href="#tri"/></svg></button><button class="tb" title="重做"><svg><use href="#redo"/></svg></button><button class="drop dim" title="重做列表"><svg><use href="#tri"/></svg></button><i class="sep"></i>
          <button class="tb" title="平移"><svg><use href="#pan"/></svg></button><button class="tb" title="实时缩放"><svg><use href="#zoomrt"/></svg></button><button class="tb" title="窗口缩放"><svg><use href="#zoomwin"/></svg></button><button class="tb" title="缩放上一个"><svg><use href="#zoomprev"/></svg></button><i class="sep"></i>
          <button class="tb" title="特性"><svg><use href="#props"/></svg></button><button class="tb" title="设计中心"><svg><use href="#dc"/></svg></button><button class="tb" title="工具选项板"><svg><use href="#palettes"/></svg></button><button class="tb" title="图纸集"><svg><use href="#sheet"/></svg></button><button class="tb" title="标记集"><svg><use href="#markup"/></svg></button><button class="tb" title="快速计算器"><svg><use href="#calc"/></svg></button><i class="sep"></i>
          <button class="tb" title="帮助"><svg><use href="#help"/></svg></button>
        </div>
        <div class="bar"><i class="grip"></i>
          <button class="tb" title="文字样式"><svg><use href="#textstyle"/></svg></button>
          <span class="combo style indent"><select aria-label="文字样式"><option>Standard</option></select><svg><use href="#chev"/></svg></span><i class="sep"></i>
          <button class="tb" title="标注样式"><svg><use href="#dimstyle"/></svg></button>
          <span class="combo style indent"><select aria-label="标注样式"><option>ISO-25</option></select><svg><use href="#chev"/></svg></span><i class="sep"></i>
          <button class="tb" title="表格样式"><svg><use href="#tablestyle"/></svg></button>
          <span class="combo style"><select aria-label="表格样式"><option>Standard</option></select><svg><use href="#chev"/></svg></span><i class="sep"></i>
          <button class="tb" title="多重引线样式"><svg><use href="#leaderstyle"/></svg></button>
          <span class="combo style indent"><select aria-label="多重引线样式"><option>Standard</option></select><svg><use href="#chev"/></svg></span>
        </div>
      </div>
      <div class="row">
        <div class="bar"><i class="grip"></i>
          <span class="combo workspace"><select aria-label="工作空间"><option>AutoCAD 经典</option></select><svg><use href="#chev"/></svg></span>
          <button class="tb" title="工作空间设置"><svg><use href="#gear"/></svg></button><button class="tb" title="我的工作空间"><svg><use href="#myws"/></svg></button>
        </div>
        <div class="bar"><i class="grip"></i>
          <button class="tb" title="图层特性"><svg><use href="#layerprops"/></svg></button>
          <span class="combo layer"><span class="flags"><svg class="thin"><use href="#bulb"/></svg><svg><use href="#sun"/></svg><svg><use href="#vpfreeze"/></svg><svg><use href="#unlock"/></svg><i class="swatch"></i></span><select aria-label="图层"><option>0</option></select><svg><use href="#chev"/></svg></span>
          <button class="tb" title="置为当前"><svg><use href="#layercur"/></svg></button><button class="tb" title="上一个图层"><svg><use href="#layerprev"/></svg></button><button class="tb" title="图层状态"><svg><use href="#layerstate"/></svg></button>
        </div>
        <div class="bar mono"><i class="grip"></i>
          <span class="combo color"><span class="flags"><i class="swatch"></i></span><select aria-label="颜色"><option>ByLayer</option></select><svg><use href="#chev"/></svg></span><i class="sep wide"></i>
          <span class="combo ltype"><i class="stroke"></i><select aria-label="线型"><option>ByLayer</option></select><svg><use href="#chev"/></svg></span><i class="sep wide"></i>
          <span class="combo lweight"><i class="stroke"></i><select aria-label="线宽"><option>ByLayer</option></select><svg><use href="#chev"/></svg></span><i class="sep wide"></i>
          <span class="combo style off"><select aria-label="打印样式" disabled><option>ByColor</option></select><svg><use href="#chev"/></svg></span>
        </div>
      </div>
    </div>

    <div class="work">
      <div class="side">
        <div class="vbar"><i class="grip"></i>
          <button class="tb" title="直线"><svg><use href="#line"/></svg></button><button class="tb" title="构造线"><svg><use href="#xline"/></svg></button><button class="tb" title="多段线"><svg><use href="#pline"/></svg></button><button class="tb" title="多边形"><svg><use href="#polygon"/></svg></button><button class="tb" title="矩形"><svg><use href="#rect"/></svg></button><button class="tb" title="圆弧"><svg><use href="#arc"/></svg></button><button class="tb" title="圆"><svg><use href="#circle"/></svg></button><button class="tb" title="修订云线"><svg><use href="#cloud"/></svg></button><button class="tb" title="样条曲线"><svg><use href="#spline"/></svg></button><button class="tb" title="椭圆"><svg><use href="#ellipse"/></svg></button><button class="tb" title="椭圆弧"><svg><use href="#elarc"/></svg></button><button class="tb" title="插入块"><svg><use href="#insert"/></svg></button><button class="tb" title="创建块"><svg><use href="#mkblock"/></svg></button><button class="tb" title="点"><svg><use href="#point"/></svg></button><button class="tb" title="图案填充"><svg><use href="#hatch"/></svg></button><button class="tb" title="渐变色"><svg><use href="#gradient"/></svg></button><button class="tb" title="面域"><svg><use href="#region"/></svg></button><button class="tb" title="表格"><svg><use href="#table"/></svg></button><button class="tb" title="多行文字"><svg><use href="#mtext"/></svg></button><button class="tb" title="添加选定对象"><svg><use href="#addsel"/></svg></button>
        </div>
      </div>

      <section class="doc">
        <div class="view">
          <div class="canvas">
            <svg class="mesh"><rect width="100%" height="100%" fill="url(#mesh)"/></svg>
            <svg class="cross" viewBox="0 0 64 98"><path d="M0 48.500H63M14.500 0V97M11.500 45.500H17.500V51.500H11.500z"/></svg>
            <svg class="ucs" viewBox="0 0 80 80"><path d="M8.500 22V70.500H59M4.500 66.500H12.500V74.500H4.500z"/><path d="M10 5L16.500 12 23 5M16.500 12V18M63 57L76 70M76 57L63 70"/></svg>
            <div class="cube">
              <svg viewBox="0 0 140 140"><circle cx="70" cy="70" r="54" fill="none" stroke="#303030" stroke-width="13"/></svg>
              <b class="north">北</b><b class="west">西</b><b class="east">东</b><b class="south">南</b><button class="top">上</button>
            </div>
            <button class="wcs">WCS<svg viewBox="0 0 7 5"><path d="M0 1H7" stroke="#999"/></svg></button>
            <div class="navbar">
              <svg viewBox="0 0 32 212"><path d="M5 19.500H26.500V40H5z"/><circle cx="16" cy="29" r="11"/><circle cx="16" cy="29" r="6"/><circle cx="16" cy="29" r="3"/><path d="M14 49H18L16 52zM14 119H18L16 122zM14 157H18L16 160z" fill="#2b2b2b"/><path d="M12 83L5 75Q5 72 8 73L11 76 9 66Q11 63 13 67L14 73V63Q16 61 17 63V73L19 64Q21 62 21 66V74L24 67Q26 67 25 71L23 81 20 84z"/><path d="M5 90L18 104M18 90L5 104"/><circle cx="20" cy="103" r="5"/><path d="M23 107L28 112" stroke-width="3"/><path d="M14.500 128H17.500V148H14.500z"/><ellipse cx="16" cy="140" rx="11" ry="4"/><path d="M4.500 169.500H10.500V175.500H4.500zM12.500 169.500H18.500V175.500H12.500zM21.500 169.500H27.500V175.500H21.500zM4.500 176.500H20.500V191.500H4.500z"/><path d="M9 181L16 185 9 189z" fill="#2b2b2b"/><circle cx="28" cy="5" r="3"/><circle cx="26" cy="206" r="3"/></svg>
            </div>
          </div>
          <div class="vscroll"><svg viewBox="0 0 10 6"><path d="M1 5L5 1 9 5"/></svg><i class="thumb"></i><svg class="end" viewBox="0 0 10 6"><path d="M1 1L5 5 9 1"/></svg></div>
        </div>
        <div class="tabs">
          <div class="pager"><button aria-label="第一个"><svg viewBox="0 0 10 12"><path d="M1 1V11" stroke="#666"/><path d="M9 0V12L3 6z"/></svg></button><button aria-label="上一个"><svg viewBox="0 0 10 12"><path d="M8 0V12L2 6z"/></svg></button><button aria-label="下一个"><svg viewBox="0 0 10 12"><path d="M2 0V12L8 6z"/></svg></button><button aria-label="最后一个"><svg viewBox="0 0 10 12"><path d="M9 1V11" stroke="#666"/><path d="M1 0V12L7 6z"/></svg></button></div>
          <button class="tab on">模型</button><button class="tab">布局1</button><svg class="slash" viewBox="0 0 6 20"><path d="M5.500 0L.5 19"/></svg><button class="tab">布局2</button><svg class="slash" viewBox="0 0 6 20"><path d="M5.500 0L.5 19"/></svg>
          <div class="hscroll"><i class="split"></i><svg viewBox="0 0 6 10"><path d="M5 1L1 5 5 9"/></svg><i class="thumb"></i><svg viewBox="0 0 6 10"><path d="M1 1L5 5 1 9"/></svg></div>
        </div>
      </section>

      <div class="side right">
        <div class="vbar"><i class="grip"></i>
          <button class="tb" title="删除"><svg><use href="#erase"/></svg></button><button class="tb" title="复制"><svg><use href="#copy"/></svg></button><button class="tb" title="镜像"><svg><use href="#mirror"/></svg></button><button class="tb" title="偏移"><svg><use href="#offset"/></svg></button><button class="tb" title="阵列"><svg><use href="#array"/></svg></button><button class="tb" title="移动"><svg><use href="#move"/></svg></button><button class="tb" title="旋转"><svg><use href="#rotate"/></svg></button><button class="tb" title="缩放"><svg><use href="#scale"/></svg></button><button class="tb" title="拉伸"><svg><use href="#stretch"/></svg></button><button class="tb" title="修剪"><svg><use href="#trim"/></svg></button><button class="tb" title="延伸"><svg><use href="#extend"/></svg></button><button class="tb" title="打断于点"><svg><use href="#breakpt"/></svg></button><button class="tb" title="打断"><svg><use href="#break"/></svg></button><button class="tb" title="合并"><svg><use href="#join"/></svg></button><button class="tb" title="倒角"><svg><use href="#chamfer"/></svg></button><button class="tb" title="圆角"><svg><use href="#fillet"/></svg></button><button class="tb" title="光顺曲线"><svg><use href="#blend"/></svg></button><button class="tb" title="分解"><svg><use href="#explode"/></svg></button>
        </div>
        <div class="vbar"><i class="grip"></i>
          <button class="tb" title="前置"><svg><use href="#front"/></svg></button><button class="tb" title="后置"><svg><use href="#back"/></svg></button><button class="tb" title="置于对象之上"><svg><use href="#above"/></svg></button><button class="tb" title="置于对象之下"><svg><use href="#under"/></svg></button><i class="hsep"></i><button class="tb" title="文字前置"><svg><use href="#textfront"/></svg></button><button class="tb" title="填充后置"><svg><use href="#hatchback"/></svg></button>
        </div>
      </div>
    </div>

    <section class="command">
      <div class="cmdside"><i class="dots"></i><svg viewBox="0 0 12 12"><path d="M1 1L11 11M11 1L1 11" stroke="#fff" stroke-width="2.500"/></svg><svg><use href="#wrench"/></svg></div>
      <div class="cmdmain">
        <p class="history">输入 WSCURRENT 的新值 &lt;"AutoCAD 经典"&gt;: *取消*</p>
        <div class="prompt"><svg viewBox="0 0 30 18"><path d="M.5 .5H18.500V17.500H.5z" fill="#dce2e9" stroke="#b9c2cc"/><path d="M4 5L8 9 4 13M9 13.500H15" fill="none" stroke="#5c6a7a" stroke-width="2"/><path d="M23 7H30L26.500 11z" fill="#888"/></svg><input aria-label="命令" placeholder="键入命令"></div>
      </div>
    </section>

    <footer class="status">
      <span class="height">燕秀字高=2.5</span><span class="coords">4644.3937, 640.7140, 0.0000</span>
      <div class="modes">
        <button title="推断约束"><svg><use href="#infer"/></svg></button><button title="捕捉模式"><svg><use href="#snap"/></svg></button><button title="栅格显示" class="lit"><svg><use href="#grid"/></svg></button><button title="正交模式"><svg><use href="#ortho"/></svg></button><button title="极轴追踪"><svg><use href="#polar"/></svg></button><button title="对象捕捉" class="lit"><svg><use href="#osnap"/></svg></button><button title="三维对象捕捉"><svg><use href="#osnap3"/></svg></button><button title="对象捕捉追踪"><svg><use href="#otrack"/></svg></button><button title="动态UCS" class="lit"><svg><use href="#ducs"/></svg></button><button title="动态输入"><svg><use href="#dyn"/></svg></button><button title="线宽"><svg><use href="#lwt"/></svg></button><button title="透明度" class="lit"><svg><use href="#tpy"/></svg></button><button title="快捷特性"><svg><use href="#qp"/></svg></button><button title="选择循环"><svg><use href="#sc"/></svg></button><button title="注释监视器"><svg><use href="#am"/></svg></button>
      </div>
      <div class="modes tail">
        <button class="model">模型</button><button title="布局"><svg><use href="#mspace"/></svg></button><button title="快速查看"><svg><use href="#qview"/></svg></button><i class="gap"></i>
        <button class="scale"><svg><use href="#anno"/></svg>1:1<svg class="mini"><use href="#tri"/></svg></button><button title="注释可见性"><svg viewBox="0 0 16 16"><use href="#anno" width="16" height="16"/><circle cx="12" cy="10" r="3" fill="#f7c644"/></svg></button><button title="自动缩放" class="faded"><svg><use href="#anno"/></svg></button><i class="gap slim"></i>
        <button class="ws"><svg><use href="#gear"/></svg>AutoCAD 经典<svg class="mini"><use href="#tri"/></svg></button><button title="锁定"><svg viewBox="0 0 16 16"><path class="k w" d="M.5 7.500H10.500V14.500H.5z"/><path class="k" stroke-width="1.800" d="M8.500 7V3.500Q11 .5 14 3.500V7M5.500 9V13"/></svg></button><button title="硬件加速"><svg viewBox="0 0 16 16"><circle cx="8" cy="8" r="6" fill="#777"/><path d="M4 5L8 8 10 3" stroke="#e8e8e8" stroke-width="2" fill="none"/></svg></button><button class="isolate" title="隔离对象"><svg class="thin"><use href="#bulb"/></svg></button><button class="narrow" title="状态栏菜单"><svg class="mini"><use href="#tri"/></svg></button><button title="全屏显示"><svg viewBox="0 0 16 16"><path class="k w" d="M1.500 1.500H14.500V13.500H1.500z"/><path class="k" d="M2 3H14" stroke-width="2"/></svg></button>
        <svg class="resize" viewBox="0 0 20 20"><path d="M14 8H16M10 12H12M14 12H16M6 16H8M10 16H12M14 16H16" stroke="#e9e9e9" stroke-width="2"/></svg>
      </div>
    </footer>
  </main>

  <aside class="edge edge-right"></aside>
</div>
<div class="pill"></div>
<div class="upload"><svg viewBox="0 0 38 32"><g fill="none" stroke="#fff" stroke-width="4"><circle cx="19" cy="11" r="5"/><circle cx="13" cy="20" r="5"/><circle cx="25" cy="20" r="5"/></g></svg><span>拖拽上</span></div>
<div class="stamp">
  <p class="ghost">注释可见性: 显示所有比例的注释性对象</p>
  <svg class="arrow" viewBox="0 0 60 28"><path d="M2 2L44 13 42 9 58 26 36 25 40 21z" fill="#e04848"/></svg>
  <svg class="hex" viewBox="0 0 72 82"><path d="M36 0L71 20V62L36 82 1 62V20z" fill="#51b4e6" opacity=".82"/><path d="M36 0L1 20V40Q8 14 40 10 52 14 56 30 58 18 50 8z" fill="#9fcfe6"/><path d="M17 30L36 19 55 30V52L36 63 17 52z" fill="#73bfe6" stroke="#fff" stroke-width="3"/><path d="M23 35L36 42V56L23 49z" fill="#8ecbea"/><path d="M36 42L50 34V49L36 56z" fill="#5b9fd4"/><path d="M23 33L36 26 49 33 36 40z" fill="#b4dcf0"/><path d="M1 40Q2 60 30 64M71 30Q72 58 46 66" stroke="#e6f5fc" stroke-width="2" fill="none"/></svg>
  <strong>3D世界网</strong>
</div>
</body>
</html>
```

FILE: styles.css
```css
* { box-sizing: border-box; }
body { margin: 0; background: #f4f4f4; color: #000; font: 16px/20px "Noto Sans", "Noto Sans CJK SC", sans-serif; overflow: hidden; }
button { margin: 0; padding: 0; border: 0; background: none; color: inherit; font: inherit; }
p { margin: 0; }
svg { display: block; flex: none; }
.sprite { position: absolute; width: 0; height: 0; }

.k { fill: none; stroke: #3a4048; }
.q { fill: none; stroke: #a9a9a9; }
.b { fill: none; stroke: #245f9d; }
.w { fill: #fafafa; }
.g { fill: #dfe2e6; }
.bf { fill: #b5e0f7; }
.sh { fill: url(#shade); }
.t { stroke-width: 2; }
.minor { stroke: #18191c; }
.major { stroke: #2d2e34; }

.desktop { display: grid; grid-template-columns: 9px minmax(0, 1fr) 11px; height: 100vh; }
.edge { overflow: hidden; background: linear-gradient(#c4c4c4 39px, #eee 39px); }
.edge-left p { width: 18px; margin: 382px 0 0 4px; color: #f07a2c; font-weight: 700; font-size: 18px; line-height: 24px; }
.edge-right { background: linear-gradient(#cbcbcb 40px, #efefef 40px 336px, #bdbdbd 336px 804px, #ececec 804px); }

.window { position: relative; display: flex; flex-direction: column; min-width: 0; margin: 0 0 2px; border-top: 3px solid #a9a9a9; background: #696969; }
.titlebar { display: flex; align-items: center; flex: none; gap: 23px; height: 39px; padding: 0 24px 0 678px; background: #fff; border-bottom: 1px solid #333; }
.caption { display: flex; gap: 46px; margin-left: auto; }
.caption svg { width: 12px; height: 12px; fill: none; stroke: #777; }
.appbutton { position: absolute; z-index: 2; left: 0; top: 8px; width: 41px; height: 41px; border: 1px solid #111; background: linear-gradient(#d6d6d6, #888); }
.menubar { display: flex; align-items: center; flex: none; gap: 27px; height: 25px; padding-left: 56px; background: linear-gradient(#ababab, #626262); color: #fff; font: 15px/20px "Noto Sans", "Noto Sans CJK SC", sans-serif; }
.mdi { margin: 0 4px 0 auto; }
.mdi svg { width: 44px; height: 12px; fill: none; stroke: #222; }

.docks { display: flex; flex-direction: column; flex: none; gap: 3px; padding-bottom: 4px; }
.row { display: flex; }
.bar { display: flex; align-items: stretch; height: 24px; border: solid #333; border-width: 1px 1px 1px 0; background: #ededed; }
.grip { width: 9px; background: radial-gradient(circle, #222 1px, #6d6d6d 1px) 0 0 / 3px 3px; border: 1px solid #555; }
.tb { display: flex; align-items: center; justify-content: center; width: 23px; }
.tb svg { width: 16px; height: 16px; }
.drop { display: flex; align-items: center; justify-content: center; width: 13px; }
.drop svg { width: 7px; height: 5px; }
.dim { color: #999; }
.sep { width: 6px; background: linear-gradient(#888, #888) 2px 50% / 1px 18px no-repeat; }
.sep.wide { width: 8px; background: linear-gradient(#888, #888) 2px 50% / 1px 18px no-repeat, linear-gradient(#888, #888) 5px 50% / 1px 18px no-repeat; }
.combo { position: relative; display: flex; align-items: center; background: #e1e1e1; border: 1px solid #c6ccd0; padding-left: 4px; }
.combo select { flex: 1; min-width: 0; height: 20px; padding: 0; border: 0; background: none; appearance: none; color: #000; font: inherit; line-height: 20px; opacity: 1; }
.combo > svg { position: absolute; right: 5px; top: 7px; width: 10px; height: 6px; color: #555; pointer-events: none; }
.style { width: 119px; }
.indent { padding-left: 18px; }
.workspace { width: 174px; padding-left: 8px; }
.layer { width: 299px; }
.color { width: 149px; }
.ltype { width: 158px; }
.lweight { width: 123px; }
.flags { display: flex; align-items: center; gap: 1px; margin-right: 4px; }
.flags svg { width: 15px; height: 15px; }
.flags .thin { width: 12px; }
.layer .flags { gap: 2px; }
.swatch { width: 10px; height: 10px; border: 1px solid #000; background: #fff; }
.mono { font-family: "Liberation Mono", monospace; font-size: 13px; }
.stroke { height: 1px; background: #000; margin-right: 4px; }
.ltype .stroke { width: 60px; }
.lweight .stroke { width: 36px; }
.off { background: #cfcfcf; }
.off select { color: #888; padding-left: 4px; }
.off > svg { color: #aaa; }

.work { display: flex; flex: 1; min-height: 0; }
.side { display: flex; flex-direction: column; gap: 1px; width: 29px; }
.right { width: 32px; padding-left: 4px; }
.vbar { display: flex; flex-direction: column; width: 25px; border: solid #333; border-width: 0 1px 1px; background: #ededed; }
.vbar .grip { width: auto; height: 9px; }
.vbar .tb { height: 22px; }
.hsep { height: 5px; margin: 0 2px; border-bottom: 1px solid #999; }
.doc { display: flex; flex: 1; flex-direction: column; min-width: 0; border: solid #a8a8a8; border-width: 1px 0 0 2px; }
.view { display: flex; flex: 1; min-height: 0; padding-top: 1px; }
.canvas { position: relative; flex: 1; overflow: hidden; background: #000; }
.mesh { width: 100%; height: 100%; }
.cross, .ucs { position: absolute; fill: none; stroke: #fff; }
.cross { left: 0; top: 5px; width: 64px; height: 98px; }
.ucs { left: 11px; bottom: 10px; width: 80px; height: 80px; }
.cube { position: absolute; right: 13px; top: 11px; width: 140px; height: 140px; color: #aaa; font: 18px/20px "Noto Sans CJK SC", sans-serif; }
.cube b { position: absolute; font-weight: 500; }
.north { left: 61px; top: 4px; }
.south { left: 61px; top: 117px; }
.west { left: 5px; top: 61px; }
.east { right: 5px; top: 61px; }
.top { position: absolute; left: 44px; top: 45px; width: 52px; height: 52px; background: linear-gradient(#8f9094, #8f9094) 50% 50% / 32px 32px no-repeat #a0a0a0; color: #505257; font-size: 30px; font-weight: 300; line-height: 48px; }
.wcs { position: absolute; right: 59px; top: 169px; display: flex; align-items: center; gap: 6px; width: 48px; height: 18px; padding-left: 5px; border: 1px solid #999; border-radius: 4px; background: #77777c; color: #333; font: 11px/16px "Liberation Sans", sans-serif; }
.wcs svg { width: 7px; height: 5px; }
.navbar { position: absolute; right: 4px; top: 212px; width: 32px; height: 212px; border-radius: 4px; background: #444; }
.navbar svg { width: 32px; height: 212px; fill: none; stroke: #2f2f2f; }
.vscroll { display: flex; flex-direction: column; align-items: center; width: 23px; padding: 8px 2px; border-right: 1px solid #fff; background: #f0f0f0; }
.vscroll svg, .hscroll svg { fill: none; stroke: #444; stroke-width: 2; }
.vscroll svg { width: 10px; height: 6px; }
.vscroll .thumb { width: 19px; height: 21px; margin-top: 7px; background: #cdcdcd; }
.vscroll .end { margin-top: auto; }
.tabs { display: flex; flex: none; height: 20px; background: #f0f0f0; border-bottom: 1px solid #fff; font: 14px/18px "Noto Sans CJK SC", sans-serif; }
.pager { display: flex; }
.pager button { display: flex; align-items: center; justify-content: center; width: 18px; border-right: 1px solid #bbb; }
.pager svg { width: 10px; height: 12px; fill: #666; }
.tab { padding: 0 8px; }
.tab.on { width: 56px; padding: 0; background: #000; color: #fff; clip-path: polygon(0 0, 100% 0, 90% 100%, 12% 100%); }
.slash { width: 6px; height: 20px; fill: none; stroke: #777; }
.hscroll { display: flex; flex: none; align-items: center; width: 35%; margin-left: auto; padding: 0 30px 0 5px; }
.hscroll svg { width: 6px; height: 10px; }
.split { width: 6px; height: 18px; margin-right: 8px; background: #c8c8c8; }
.hscroll .thumb { width: 21px; height: 18px; margin: 0 7px 0 auto; background: #cdcdcd; }

.command { display: flex; flex: none; height: 65px; margin-top: 5px; }
.cmdside { display: flex; flex-direction: column; align-items: center; justify-content: space-between; width: 28px; padding: 5px 0 2px; background: linear-gradient(#8a8a8a, #444); }
.cmdside svg { width: 12px; height: 12px; }
.cmdside svg:last-child { width: 18px; height: 18px; }
.dots { width: 22px; height: 7px; background: radial-gradient(circle, #bbb 1px, transparent 1px) 0 0 / 4px 3px; }
.cmdmain { flex: 1; display: flex; flex-direction: column; background: #c8c8c8; border-top: 1px solid #888; }
.history { height: 36px; padding: 11px 0 0 5px; border-bottom: 1px solid #777; font: 300 19px/22px "DejaVu Sans Mono", "Noto Sans CJK SC", monospace; color: #111; white-space: nowrap; }
.prompt { display: flex; flex: 1; align-items: center; gap: 12px; padding-left: 7px; background: #fff; border-bottom: 1px solid #aaa; }
.prompt svg { width: 30px; height: 18px; }
.prompt input { flex: 1; height: 24px; padding: 0; border: 0; outline: 0; background: none; font: italic 300 20px/24px "Noto Sans CJK SC", sans-serif; }
.prompt input::placeholder { color: #999; }

.status { display: flex; flex: none; height: 22px; border-top: 1px solid #111; background: linear-gradient(#999, #7b7b7b); font: 14px/20px "Liberation Mono", "Noto Sans CJK SC", monospace; }
.height { width: 112px; padding: 4px 0 0 7px; white-space: nowrap; line-height: 16px; }
.coords { width: 267px; padding-top: 2px; font-size: 13px; line-height: 18px; color: #a3a3a3; white-space: nowrap; }
.modes { display: flex; }
.modes button { display: flex; align-items: center; justify-content: center; width: 22px; border-right: 1px solid #555; background: linear-gradient(#c2c2c2, #9c9c9c); white-space: nowrap; }
.modes svg { width: 16px; height: 16px; }
.modes .thin { width: 12px; }
.modes .lit { background: linear-gradient(#f2fbfe, #7fc0dc); }
.modes .mini { width: 9px; height: 6px; }
.tail { margin-left: auto; }
.modes .model { width: 37px; border-left: 1px solid #555; }
.modes .model, .modes .scale, .modes .ws { padding-top: 2px; }
.modes .scale { width: 60px; gap: 2px; }
.modes .ws { width: 131px; gap: 3px; }
.modes .isolate { width: 36px; border: 1px solid #555; background: #777; }
.modes .narrow { width: 14px; }
.faded svg { opacity: .4; }
.gap { width: 22px; border-right: 1px solid #555; }
.gap.slim { width: 5px; }
.modes .resize { width: 20px; height: 20px; }

.pill { position: absolute; right: 180px; top: -24px; width: 146px; height: 30px; border-radius: 15px; background: #fff; box-shadow: 0 1px 3px #888; }
.upload { position: absolute; z-index: 3; right: 0; top: 62px; display: flex; width: 99px; height: 32px; overflow: hidden; border: 1px solid #2a9cf5; border-right: 0; border-radius: 4px 0 0 4px; background: linear-gradient(#d8f0ff, #b5e2ff); color: #5ab4f8; font: 16px/30px "Noto Sans CJK SC", sans-serif; white-space: nowrap; }
.upload svg { width: 38px; height: 32px; margin-right: 16px; background: #1e9fff; }
.stamp { position: absolute; z-index: 3; right: 0; bottom: 10px; width: 320px; height: 86px; pointer-events: none; }
.hex { position: absolute; left: 38px; top: 2px; width: 72px; height: 82px; opacity: .85; }
.arrow { position: absolute; left: 10px; top: 40px; width: 60px; height: 28px; }
.stamp strong { position: absolute; left: 116px; top: 8px; color: #e2e2e2; font: 700 42px/44px "Noto Sans CJK SC", sans-serif; white-space: nowrap; }
.ghost { position: absolute; left: 8px; top: 42px; padding: 2px 8px 0; border: 1px solid #f6f6f6; color: #e6e6e6; font: 15px/26px "Noto Sans CJK SC", sans-serif; white-space: nowrap; }
```
